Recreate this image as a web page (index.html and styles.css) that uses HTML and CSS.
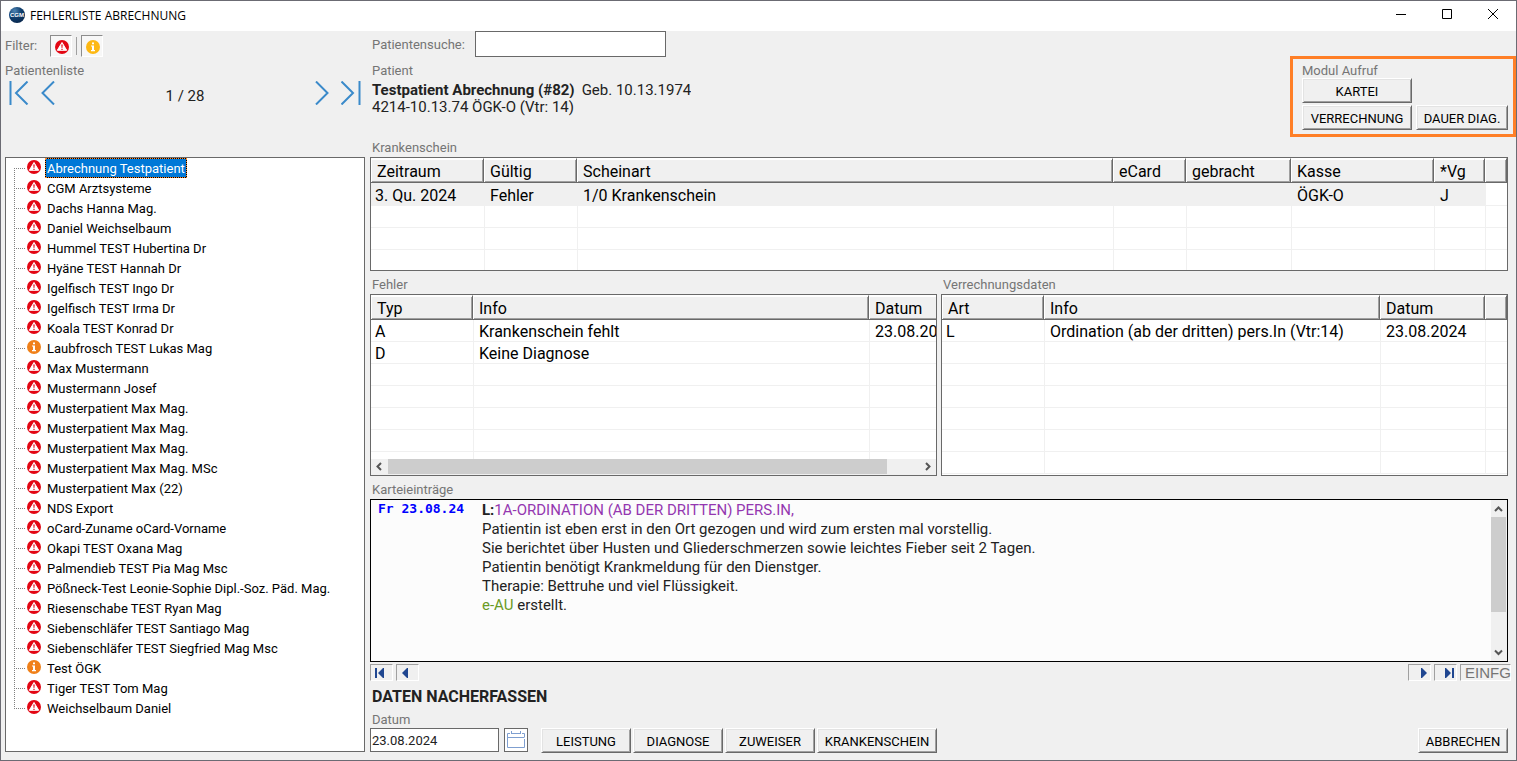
FILE: index.html
```html
<!DOCTYPE html>
<html lang="de">
<head>
<meta charset="utf-8">
<title>Fehlerliste Abrechnung</title>
<link rel="stylesheet" href="styles.css">
</head>
<body>
<svg class="defs" width="0" height="0" aria-hidden="true">
  <symbol id="warn" viewBox="0 0 14 14">
    <circle cx="7" cy="7" r="7" fill="#e30613"/>
    <path d="M7 2.500 L11.700 10.300 H2.300 Z" fill="#fff" stroke="#fff" stroke-width="1" stroke-linejoin="round"/>
    <path d="M6.300 4.600 H7.700 L7.400 8 H6.600 Z M6.400 8.700 H7.600 V9.900 H6.400 Z" fill="#e30613"/>
  </symbol>
  <symbol id="info" viewBox="0 0 14 14">
    <circle cx="7" cy="7" r="7" fill="currentColor"/>
    <path d="M6 2.400 H8 V4.200 H6 Z M5 5.400 H8 V10 H9 V11.200 H5 V10 H6 V6.500 H5 Z" fill="#fff"/>
  </symbol>
</svg>
<div class="window">
  <header class="titlebar">
    <svg class="logo" width="16" height="16" viewBox="0 0 16 16">
      <defs><radialGradient id="globe" cx="0.35" cy="0.25" r="0.8"><stop offset="0" stop-color="#4f86b5"/><stop offset="0.5" stop-color="#11406f"/><stop offset="1" stop-color="#08264c"/></radialGradient></defs>
      <circle cx="8" cy="8" r="8" fill="url(#globe)"/>
      <text x="8" y="10" text-anchor="middle" class="logo-text">CGM</text>
    </svg>
    <h1 class="title">FEHLERLISTE ABRECHNUNG</h1>
    <button class="win-btn" type="button" aria-label="Minimieren"><svg width="12" height="12" viewBox="0 0 12 12"><path d="M1 5.500 H11" stroke="#000" fill="none"/></svg></button>
    <button class="win-btn" type="button" aria-label="Maximieren"><svg width="12" height="12" viewBox="0 0 12 12"><path d="M1.500 .5 H10.500 V9.500 H1.500 Z" stroke="#000" fill="none"/></svg></button>
    <button class="win-btn" type="button" aria-label="Schließen"><svg width="12" height="12" viewBox="0 0 12 12"><path d="M1 0 L11 10 M11 0 L1 10" stroke="#000" fill="none"/></svg></button>
  </header>
  <main class="content">
    <section class="left">
      <div class="filter">
        <span class="label filter-label">Filter:</span>
        <button class="toggle" type="button" aria-label="Fehler" aria-pressed="true"><svg width="14" height="14"><use href="#warn"/></svg></button>
        <span class="divider"></span>
        <button class="toggle info-yellow" type="button" aria-label="Hinweise" aria-pressed="true"><svg width="14" height="14"><use href="#info"/></svg></button>
      </div>
      <h2 class="label">Patientenliste</h2>
      <nav class="pager">
        <button class="page-btn" type="button" aria-label="Erster"><svg width="20" height="24" viewBox="0 0 20 24"><path d="M1.500 0 V24" stroke-width="2"/><path d="M18.500 .5 L7 12 L18.500 23.500"/></svg></button>
        <button class="page-btn" type="button" aria-label="Zurück"><svg width="14" height="24" viewBox="0 0 14 24"><path d="M13 .5 L1.500 12 L13 23.500"/></svg></button>
        <span class="page-count">1 / 28</span>
        <button class="page-btn" type="button" aria-label="Weiter"><svg width="14" height="24" viewBox="0 0 14 24"><path d="M1 .5 L12.500 12 L1 23.500"/></svg></button>
        <button class="page-btn" type="button" aria-label="Letzter"><svg width="20" height="24" viewBox="0 0 20 24"><path d="M18.500 0 V24" stroke-width="2"/><path d="M.5 .5 L12 12 L.5 23.500"/></svg></button>
      </nav>
      <ul class="patients" id="patients">
        <li class="patient"><span class="branch"></span><svg class="mark" width="14" height="14"><use href="#warn"/></svg><span class="name selected">Abrechnung Testpatient</span></li>
        <li class="patient"><span class="branch"></span><svg class="mark" width="14" height="14"><use href="#warn"/></svg><span class="name">CGM Arztsysteme</span></li>
        <li class="patient"><span class="branch"></span><svg class="mark" width="14" height="14"><use href="#warn"/></svg><span class="name">Dachs Hanna Mag.</span></li>
        <li class="patient"><span class="branch"></span><svg class="mark" width="14" height="14"><use href="#warn"/></svg><span class="name">Daniel Weichselbaum</span></li>
        <li class="patient"><span class="branch"></span><svg class="mark" width="14" height="14"><use href="#warn"/></svg><span class="name">Hummel TEST Hubertina Dr</span></li>
        <li class="patient"><span class="branch"></span><svg class="mark" width="14" height="14"><use href="#warn"/></svg><span class="name">Hyäne TEST Hannah Dr</span></li>
        <li class="patient"><span class="branch"></span><svg class="mark" width="14" height="14"><use href="#warn"/></svg><span class="name">Igelfisch TEST Ingo Dr</span></li>
        <li class="patient"><span class="branch"></span><svg class="mark" width="14" height="14"><use href="#warn"/></svg><span class="name">Igelfisch TEST Irma Dr</span></li>
        <li class="patient"><span class="branch"></span><svg class="mark" width="14" height="14"><use href="#warn"/></svg><span class="name">Koala TEST Konrad Dr</span></li>
        <li class="patient"><span class="branch"></span><svg class="mark" width="14" height="14"><use href="#info"/></svg><span class="name">Laubfrosch TEST Lukas Mag</span></li>
        <li class="patient"><span class="branch"></span><svg class="mark" width="14" height="14"><use href="#warn"/></svg><span class="name">Max Mustermann</span></li>
        <li class="patient"><span class="branch"></span><svg class="mark" width="14" height="14"><use href="#warn"/></svg><span class="name">Mustermann Josef</span></li>
        <li class="patient"><span class="branch"></span><svg class="mark" width="14" height="14"><use href="#warn"/></svg><span class="name">Musterpatient Max Mag.</span></li>
        <li class="patient"><span class="branch"></span><svg class="mark" width="14" height="14"><use href="#warn"/></svg><span class="name">Musterpatient Max Mag.</span></li>
        <li class="patient"><span class="branch"></span><svg class="mark" width="14" height="14"><use href="#warn"/></svg><span class="name">Musterpatient Max Mag.</span></li>
        <li class="patient"><span class="branch"></span><svg class="mark" width="14" height="14"><use href="#warn"/></svg><span class="name">Musterpatient Max Mag. MSc</span></li>
        <li class="patient"><span class="branch"></span><svg class="mark" width="14" height="14"><use href="#warn"/></svg><span class="name">Musterpatient Max (22)</span></li>
        <li class="patient"><span class="branch"></span><svg class="mark" width="14" height="14"><use href="#warn"/></svg><span class="name">NDS Export</span></li>
        <li class="patient"><span class="branch"></span><svg class="mark" width="14" height="14"><use href="#warn"/></svg><span class="name">oCard-Zuname oCard-Vorname</span></li>
        <li class="patient"><span class="branch"></span><svg class="mark" width="14" height="14"><use href="#warn"/></svg><span class="name">Okapi TEST Oxana Mag</span></li>
        <li class="patient"><span class="branch"></span><svg class="mark" width="14" height="14"><use href="#warn"/></svg><span class="name">Palmendieb TEST Pia Mag Msc</span></li>
        <li class="patient"><span class="branch"></span><svg class="mark" width="14" height="14"><use href="#warn"/></svg><span class="name">Pößneck-Test Leonie-Sophie Dipl.-Soz. Päd. Mag.</span></li>
        <li class="patient"><span class="branch"></span><svg class="mark" width="14" height="14"><use href="#warn"/></svg><span class="name">Riesenschabe TEST Ryan Mag</span></li>
        <li class="patient"><span class="branch"></span><svg class="mark" width="14" height="14"><use href="#warn"/></svg><span class="name">Siebenschläfer TEST Santiago Mag</span></li>
        <li class="patient"><span class="branch"></span><svg class="mark" width="14" height="14"><use href="#warn"/></svg><span class="name">Siebenschläfer TEST Siegfried Mag Msc</span></li>
        <li class="patient"><span class="branch"></span><svg class="mark" width="14" height="14"><use href="#info"/></svg><span class="name">Test ÖGK</span></li>
        <li class="patient"><span class="branch"></span><svg class="mark" width="14" height="14"><use href="#warn"/></svg><span class="name">Tiger TEST Tom Mag</span></li>
        <li class="patient"><span class="branch"></span><svg class="mark" width="14" height="14"><use href="#warn"/></svg><span class="name">Weichselbaum Daniel</span></li>
      </ul>
    </section>

    <section class="right">
      <div class="top">
        <div class="top-info">
          <div class="search">
            <label class="label" for="search">Patientensuche:</label>
            <input class="search-input" id="search" type="text">
          </div>
          <h2 class="label">Patient</h2>
          <p class="patient-name"><strong>Testpatient Abrechnung (#82)</strong><span>Geb. 10.13.1974</span></p>
          <p class="patient-insurance">4214-10.13.74 ÖGK-O (Vtr: 14)</p>
        </div>
        <div class="modules">
          <h2 class="label">Modul Aufruf</h2>
          <div class="module-grid">
            <button class="btn" type="button">KARTEI</button>
            <span></span>
            <button class="btn" type="button">VERRECHNUNG</button>
            <button class="btn" type="button">DAUER DIAG.</button>
          </div>
        </div>
      </div>

      <h2 class="label">Krankenschein</h2>
      <div class="grid-box scheine">
        <table class="data">
          <colgroup><col class="w113"><col class="w93"><col><col class="w73"><col class="w105"><col class="w143"><col class="w51"><col class="w22"></colgroup>
          <thead><tr><th>Zeitraum</th><th>Gültig</th><th>Scheinart</th><th>eCard</th><th>gebracht</th><th>Kasse</th><th>*Vg</th><th></th></tr></thead>
          <tbody>
            <tr class="current"><td>3. Qu. 2024</td><td>Fehler</td><td>1/0 Krankenschein</td><td></td><td></td><td>ÖGK-O</td><td>J</td><td></td></tr>
            <tr><td></td><td></td><td></td><td></td><td></td><td></td><td></td><td></td></tr>
            <tr><td></td><td></td><td></td><td></td><td></td><td></td><td></td><td></td></tr>
            <tr><td></td><td></td><td></td><td></td><td></td><td></td><td></td><td></td></tr>
          </tbody>
        </table>
      </div>

      <div class="pair">
        <div class="pane">
          <h2 class="label">Fehler</h2>
          <div class="grid-box details">
            <div class="viewport">
              <table class="data wide">
                <colgroup><col class="w102"><col><col class="w104"></colgroup>
                <thead><tr><th>Typ</th><th>Info</th><th>Datum</th></tr></thead>
                <tbody>
                  <tr><td>A</td><td>Krankenschein fehlt</td><td>23.08.2024</td></tr>
                  <tr><td>D</td><td>Keine Diagnose</td><td></td></tr>
                  <tr><td></td><td></td><td></td></tr>
                  <tr><td></td><td></td><td></td></tr>
                  <tr><td></td><td></td><td></td></tr>
                  <tr><td></td><td></td><td></td></tr>
                  <tr><td></td><td></td><td></td></tr>
                </tbody>
              </table>
            </div>
            <div class="hscroll">
              <button class="arrow" type="button" aria-label="Nach links"><svg width="9" height="9" viewBox="0 0 9 9"><path d="M6 1 L2.500 4.500 L6 8"/></svg></button>
              <div class="htrack"><div class="hthumb"></div></div>
              <button class="arrow" type="button" aria-label="Nach rechts"><svg width="9" height="9" viewBox="0 0 9 9"><path d="M3 1 L6.500 4.500 L3 8"/></svg></button>
            </div>
          </div>
        </div>
        <div class="pane">
          <h2 class="label">Verrechnungsdaten</h2>
          <div class="grid-box details">
            <div class="viewport">
              <table class="data">
                <colgroup><col class="w102"><col><col class="w105"><col class="w22"></colgroup>
                <thead><tr><th>Art</th><th>Info</th><th>Datum</th><th></th></tr></thead>
                <tbody>
                  <tr><td>L</td><td>Ordination (ab der dritten) pers.In (Vtr:14)</td><td>23.08.2024</td><td></td></tr>
                  <tr><td></td><td></td><td></td><td></td></tr>
                  <tr><td></td><td></td><td></td><td></td></tr>
                  <tr><td></td><td></td><td></td><td></td></tr>
                  <tr><td></td><td></td><td></td><td></td></tr>
                  <tr><td></td><td></td><td></td><td></td></tr>
                  <tr><td></td><td></td><td></td><td></td></tr>
                </tbody>
              </table>
            </div>
          </div>
        </div>
      </div>

      <h2 class="label">Karteieinträge</h2>
      <div class="record">
        <div class="record-body">
          <time class="record-date">Fr 23.08.24</time>
          <div class="record-text">
            <p><b>L:</b><span class="purple">1A-ORDINATION (AB DER DRITTEN) PERS.IN,</span></p>
            <p>Patientin ist eben erst in den Ort gezogen und wird zum ersten mal vorstellig.</p>
            <p>Sie berichtet über Husten und Gliederschmerzen sowie leichtes Fieber seit 2 Tagen.</p>
            <p>Patientin benötigt Krankmeldung für den Dienstger.</p>
            <p>Therapie: Bettruhe und viel Flüssigkeit.</p>
            <p><span class="green">e-AU</span> erstellt.</p>
          </div>
        </div>
        <div class="vscroll">
          <button class="arrow" type="button" aria-label="Nach oben"><svg width="9" height="9" viewBox="0 0 9 9"><path d="M1 7 L4.500 3.500 L8 7"/></svg></button>
          <div class="vtrack"><div class="vthumb"></div></div>
          <button class="arrow" type="button" aria-label="Nach unten"><svg width="9" height="9" viewBox="0 0 9 9"><path d="M1 2.500 L4.500 6 L8 2.500"/></svg></button>
        </div>
      </div>

      <div class="record-nav">
        <button class="step" type="button" aria-label="Erster Eintrag"><svg width="10" height="10" viewBox="0 0 10 10"><path d="M0 0 H2 V10 H0 Z M9 0 V10 H8 L3 5 L8 0 Z"/></svg></button>
        <button class="step" type="button" aria-label="Voriger Eintrag"><svg width="10" height="10" viewBox="0 0 10 10"><path d="M7 0 V10 H6 L1 5 L6 0 Z"/></svg></button>
        <span class="spacer"></span>
        <button class="step end" type="button" aria-label="Nächster Eintrag"><svg width="10" height="10" viewBox="0 0 10 10"><path d="M3 0 V10 H4 L9 5 L4 0 Z"/></svg></button>
        <button class="step end" type="button" aria-label="Letzter Eintrag"><svg width="10" height="10" viewBox="0 0 10 10"><path d="M1 0 V10 H2 L7 5 L2 0 Z M8 0 H10 V10 H8 Z"/></svg></button>
        <span class="mode">EINFG</span>
      </div>

      <h2 class="heading">DATEN NACHERFASSEN</h2>
      <label class="label date-label" for="date">Datum</label>
      <div class="actions">
        <input class="date-input" id="date" type="text" value="23.08.2024">
        <button class="calendar" type="button" aria-label="Kalender"><svg width="20" height="20" viewBox="0 0 20 20" fill="none" stroke="#7f9fd0"><path d="M4 3.500 H1.500 V17.500 H18.500 V9 M18.500 7 V3.500 H16 M6 3.500 H14 M1.500 7.500 H18.500 M5.500 1 V4 M14.500 1 V4"/></svg></button>
        <div class="action-group">
          <button class="btn" type="button">LEISTUNG</button>
          <button class="btn" type="button">DIAGNOSE</button>
          <button class="btn" type="button">ZUWEISER</button>
          <button class="btn long" type="button">KRANKENSCHEIN</button>
        </div>
        <span class="spacer"></span>
        <button class="btn" type="button">ABBRECHEN</button>
      </div>
    </section>
  </main>
</div>
</body>
</html>
```
FILE: styles.css
```css
* { box-sizing: border-box; }

body {
  margin: 0;
  font-family: Roboto, "Liberation Sans", sans-serif;
  font-size: 13px;
  color: #222;
}

h1, h2, p, ul { margin: 0; padding: 0; }
button, input { font: inherit; color: inherit; border-radius: 0; margin: 0; }
button { padding: 0; background: none; border: 0; }
svg { display: block; flex: none; }
.defs { position: absolute; }

.window {
  display: flex;
  flex-direction: column;
  min-height: 100vh;
  background: #f0f0f0;
  border: 1px solid #6b6b73;
}

.titlebar {
  display: flex;
  align-items: center;
  height: 30px;
  padding: 0 0 2px 8px;
  background: #fff;
}
.logo-text { font: bold 6px "Liberation Sans", sans-serif; fill: #fff; }
.title {
  flex: 1;
  margin-left: 5px;
  font: 12px "Open Sans", "Noto Sans", sans-serif;
  color: #000;
}
.win-btn {
  display: flex;
  align-items: center;
  justify-content: center;
  width: 46px;
  height: 28px;
}

.content {
  flex: 1;
  display: grid;
  grid-template-columns: 360px minmax(0, 1fr);
  column-gap: 5px;
  padding: 0 8px 7px 4px;
}
.left, .right { display: flex; flex-direction: column; min-width: 0; }

.label {
  display: block;
  height: 16px;
  font-size: 13px;
  font-weight: 400;
  line-height: 18px;
  color: #757575;
}
.right .label { padding-left: 2px; }

/* Patient list */
.filter { display: flex; align-items: center; height: 30px; margin-bottom: 1px; }
.filter-label { width: 45px; line-height: 16px; }
.toggle {
  display: flex;
  align-items: center;
  justify-content: center;
  width: 22px;
  height: 22px;
  padding: 1px 0 0 2px;
  background: #f7f7f7;
  border: 1px solid;
  border-color: #8c8c8c #fff #fff #8c8c8c;
}
.info-yellow { color: #fdb813; }
.divider { width: 1px; height: 18px; margin: 0 4px; background: #a0a0a0; }

.pager {
  display: flex;
  align-items: flex-start;
  gap: 12px;
  height: 79px;
  padding: 3px 4px 0 4px;
}
.page-btn svg { fill: none; stroke: #3a8aca; stroke-width: 2; }
.page-count { flex: 1; font-size: 15px; line-height: 30px; text-align: center; }

.patients {
  flex: 1;
  margin-bottom: 1px;
  padding-left: 8px;
  list-style: none;
  color: #000;
  background: #fff;
  border: 1px solid #696969;
}
.patient { display: flex; height: 20px; line-height: 22px; }
.branch {
  width: 13px;
  background:
    repeating-linear-gradient(to bottom, #808080 0 1px, transparent 1px 2px) 0 0 / 1px 100% no-repeat,
    repeating-linear-gradient(to right, #808080 0 1px, transparent 1px 2px) 0 10px / 11px 1px no-repeat;
}
.patient:first-child .branch { background-position: 0 10px, 0 10px; }
.patient:last-child .branch { background-size: 1px 10px, 11px 1px; }
.mark { margin: 2px 4px 0 0; color: #f08019; }
.name { padding: 0 2px; }
.selected {
  padding: 0 1px;
  line-height: 19px;
  color: #fff;
  border: 1px dotted #ff8728;
  background: linear-gradient(#0078d7, #0078d7) padding-box, linear-gradient(#000, #000) border-box;
}

/* Header of the detail side */
.top { display: flex; justify-content: space-between; height: 108px; }
.search { display: flex; align-items: center; height: 26px; margin-bottom: 5px; }
.search .label { width: 105px; }
.search-input {
  width: 191px;
  height: 26px;
  background: #fff;
  border: 1px solid #696969;
}
.patient-name, .patient-insurance { padding-left: 2px; font-size: 15px; line-height: 18px; }
.patient-name { display: flex; gap: 7px; height: 17px; margin-top: 3px; overflow: hidden; }

.modules {
  height: 81px;
  margin: 25px -8px 0 0;
  padding: 3px 5px 0 9px;
  border: 3px solid #ff7f27;
}
.modules .label { padding-left: 0; }
.module-grid { display: grid; grid-template-columns: 110px 92px; gap: 2px 4px; }

.btn {
  height: 25px;
  min-width: 90px;
  padding: 2px 0 0;
  color: #000;
  line-height: 20px;
  background: #f0f0f0;
  border: 1px solid;
  border-color: #fff #696969 #696969 #fff;
  box-shadow: inset 1px 1px #e3e3e3, inset -1px -1px #a0a0a0;
}
.btn.long { min-width: 120px; }

/* Tables */
.grid-box {
  margin-top: 2px;
  overflow: hidden;
  background: #fff;
  border: 1px solid #696969;
}
.scheine { height: 114px; margin-bottom: 5px; }
.details { display: flex; flex-direction: column; height: 182px; margin-bottom: 5px; }
.viewport { flex: 1; overflow: hidden; }
.data {
  width: 100%;
  table-layout: fixed;
  border-collapse: separate;
  border-spacing: 0;
  color: #000;
  font-size: 16px;
}
.data.wide { width: calc(100% + 37px); }
.data th {
  height: 25px;
  padding: 2px 5px 0 6px;
  font-weight: 400;
  line-height: 20px;
  text-align: left;
  background: #f0f0f0;
  border: 1px solid;
  border-color: #fff #696969 #696969 #fff;
  border-left: 0;
  box-shadow: inset 1px 1px #fff, inset -1px -1px #a0a0a0;
}
.data td {
  height: 22px;
  padding: 3px 5px 0;
  line-height: 18px;
  white-space: nowrap;
  border-bottom: 1px solid #f0f0f0;
  border-left: 1px solid #f0f0f0;
}
.data td:first-child { padding-left: 4px; border-left: 0; }
.current td { height: 23px; background: #f0f0f0; }
.current td:last-child { background: #fff; }
.w22 { width: 22px; }
.w51 { width: 51px; }
.w73 { width: 73px; }
.w93 { width: 93px; }
.w102 { width: 102px; }
.w104 { width: 104px; }
.w105 { width: 105px; }
.w113 { width: 113px; }
.w143 { width: 143px; }

.pair { display: grid; grid-template-columns: 1fr 1fr; column-gap: 4px; }
.pane { min-width: 0; }

.hscroll { display: flex; height: 16px; background: #f0f0f0; }
.htrack { flex: 1; padding-bottom: 1px; }
.hthumb { width: 94%; height: 100%; background: #cdcdcd; }
.arrow { display: flex; align-items: center; justify-content: center; width: 17px; height: 17px; }
.hscroll .arrow { height: 15px; }
.vscroll .arrow { width: 15px; }
.arrow svg { fill: none; stroke: #555; stroke-width: 2; }

/* Record text */
.record {
  flex: 1;
  display: flex;
  margin-top: 2px;
  background: #fcfcfc;
  border: 1px solid #000;
}
.record-body { flex: 1; display: flex; padding-left: 7px; }
.record-date {
  width: 104px;
  font: bold 13px/18px "DejaVu Sans Mono", monospace;
  color: #00f;
}
.record-text { padding-top: 1px; font-size: 15px; line-height: 19px; }
.purple { color: #9437b0; }
.green { color: #6a9a23; }
.vscroll { display: flex; flex-direction: column; width: 16px; background: #f0f0f0; }
.vtrack { flex: 1; padding-right: 1px; }
.vthumb { height: 75%; background: #cdcdcd; }

.record-nav { display: flex; gap: 3px; height: 17px; margin: 2px -3px 6px 0; }
.spacer { flex: 1; }
.step {
  display: flex;
  align-items: center;
  width: 23px;
  padding-left: 4px;
  border: 1px solid;
  border-color: #a0a0a0 #fff #fff #a0a0a0;
}
.step.end { padding-left: 9px; }
.step svg { fill: #1f4690; }
.mode {
  width: 51px;
  padding-left: 4px;
  font: 15px/15px "Liberation Sans", sans-serif;
  color: #757575;
  border: 1px solid;
  border-color: #a0a0a0 #fff #fff #a0a0a0;
}

.heading { padding-left: 2px; margin-bottom: 4px; font-size: 16px; font-weight: 700; line-height: 20px; }
.date-label { margin-bottom: 1px; }
.actions { display: flex; align-items: flex-start; }
.date-input {
  width: 129px;
  height: 24px;
  padding: 0 1px;
  background: #fff;
  border: 1px solid #696969;
}
.calendar {
  display: flex;
  align-items: center;
  justify-content: center;
  width: 24px;
  height: 24px;
  margin: 0 13px 0 5px;
  background: #fff;
  border: 1px solid #696969;
}
.action-group { display: flex; gap: 2px; }
```
